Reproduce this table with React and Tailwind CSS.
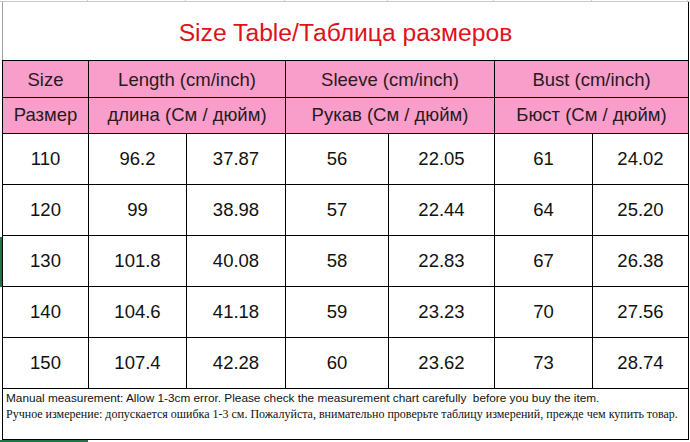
const rows = [
  ['110', '96.2', '37.87', '56', '22.05', '61', '24.02'],
  ['120', '99', '38.98', '57', '22.44', '64', '25.20'],
  ['130', '101.8', '40.08', '58', '22.83', '67', '26.38'],
  ['140', '104.6', '41.18', '59', '23.23', '70', '27.56'],
  ['150', '107.4', '42.28', '60', '23.62', '73', '28.74'],
]

const widths = ['w-[86px]', 'w-[98px]', 'w-[99px]', 'w-[103px]', 'w-[106px]', 'w-[98px]', 'w-[96px]']

export default function App() {
  return (
    <div className="relative h-[442px] w-[690px] overflow-hidden bg-white font-['Liberation_Sans',Arial,sans-serif]">
      {/* spreadsheet gridline strip */}
      <div className="flex h-[2px] border-b border-[#c8c8c8] pl-[2px]">
        {widths.map((w, i) => (
          <div key={i} className={`${w} h-full border-r border-[#d0d0d0]`} />
        ))}
      </div>

      <table className="ml-[2px] table-fixed border-collapse">
        <colgroup>
          {widths.map((w, i) => (
            <col key={i} className={w} />
          ))}
        </colgroup>
        <tbody>
          <tr className="h-[58px]">
            <td
              colSpan={7}
              className="border-l border-r border-b border-l-[#a0a0a0] border-r-black border-b-black pt-[3px] text-center text-[24.7px] text-[#de1218]"
            >
              Size Table/Таблица размеров
            </td>
          </tr>
          <tr className="h-[37px] bg-[#f99ecb] text-[18.5px] text-[#2a1a20]">
            <td className="border border-black pt-[2px] text-center">Size</td>
            <td colSpan={2} className="border border-black pt-[2px] text-center">Length (cm/inch)</td>
            <td colSpan={2} className="border border-black pt-[2px] text-center">Sleeve (cm/inch)</td>
            <td colSpan={2} className="border border-black pt-[2px] text-center">Bust (cm/inch)</td>
          </tr>
          <tr className="h-[36px] bg-[#f99ecb] text-[18.5px] text-[#2a1a20]">
            <td className="border border-black text-center">Размер</td>
            <td colSpan={2} className="border border-black text-center">длина (См / дюйм)</td>
            <td colSpan={2} className="border border-black text-center">Рукав (См / дюйм)</td>
            <td colSpan={2} className="border border-black text-center">Бюст (См / дюйм)</td>
          </tr>
          {rows.map((r) => (
            <tr key={r[0]} className="h-[51px] text-[18.5px] text-[#111]">
              {r.map((v, i) => (
                <td key={i} className="border border-black text-center">
                  {v}
                </td>
              ))}
            </tr>
          ))}
          <tr className="h-[51px]">
            <td colSpan={7} className="border border-black px-[3px] align-top leading-[16px] text-[#111]">
              <div className="pt-[1px] text-[11.8px]">
                Manual measurement: Allow 1-3cm error. Please check the measurement chart carefully&nbsp; before you buy the item.
              </div>
              <div className="font-['Liberation_Serif','Times_New_Roman',serif] text-[12px]">
                Ручное измерение: допускается ошибка 1-3 см. Пожалуйста, внимательно проверьте таблицу измерений, прежде чем купить товар.
              </div>
            </td>
          </tr>
        </tbody>
      </table>

      {/* excel selection marks */}
      <div className="absolute left-0 top-[237px] h-[50px] w-[2px] bg-[#217346]" />
      <div className="absolute left-0 top-[440px] h-[2px] w-[88px] bg-[#217346]" />
    </div>
  )
}
